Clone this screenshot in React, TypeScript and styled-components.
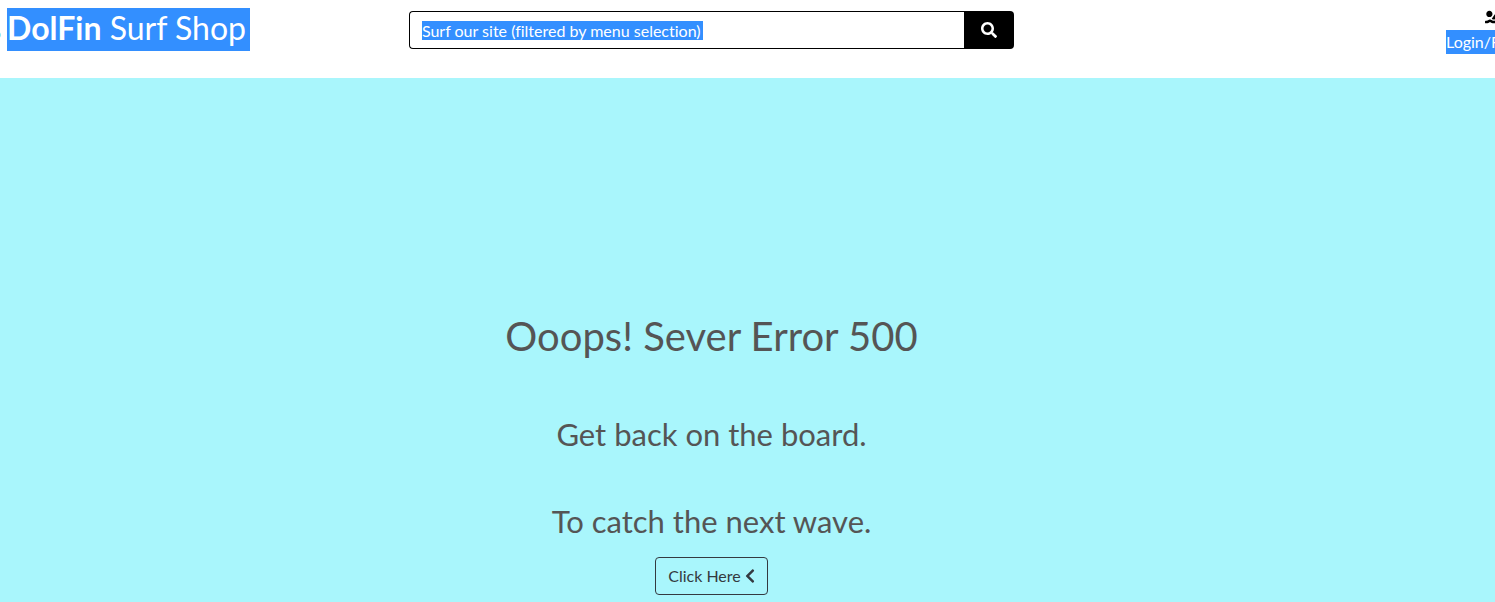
import React from "react";
import styled, { createGlobalStyle } from "styled-components";
import { FaChevronLeft, FaSearch, FaSwimmer } from "react-icons/fa";

const selection = "#338fff";

const GlobalStyle = createGlobalStyle`
  *, *::before, *::after { box-sizing: border-box; }
  body {
    margin: 0;
    background: #fff;
    color: #555;
    font: 400 16px/24px Lato, "Liberation Sans", sans-serif;
    overflow: hidden;
  }
`;

const Page = styled.div`
  display: flex;
  flex-direction: column;
  min-height: 100vh;
  overflow: hidden;
`;

const Header = styled.header`
  display: grid;
  grid-template-columns: 27.35% 40.5% 1fr;
  align-items: start;
  padding-bottom: 24px;
`;

const Brand = styled.a`
  display: flex;
  align-items: flex-start;
  padding-top: 8px;
  color: #fff;
  text-decoration: none;
`;

const LogoTip = styled.svg`
  flex: none;
  width: 7px;
  height: 43px;
`;

const BrandName = styled.span`
  padding: 0 4px 3px 0;
  background: ${selection};
  font-size: 32px;
  line-height: 40px;
  white-space: nowrap;
`;

const SearchForm = styled.form`
  display: flex;
  height: 38px;
  margin-top: 11px;
`;

const SearchInput = styled.input`
  flex: 1;
  min-width: 0;
  padding: 8px 12px 6px;
  border: 1px solid #000;
  border-right: 0;
  border-radius: 4px 0 0 4px;
  background: linear-gradient(${selection}, ${selection}) 12px center / 281px 19px no-repeat #fff;
  color: #555;
  font: inherit;
  font-variant-ligatures: none;
  outline: 0;

  &::placeholder {
    color: #fff;
    opacity: 1;
  }
`;

const SearchButton = styled.button`
  display: flex;
  align-items: center;
  justify-content: center;
  width: 50px;
  padding: 0;
  border: 0;
  border-radius: 0 4px 4px 0;
  background: #000;
  color: #fff;
  font-size: 16px;
`;

const Account = styled.a`
  display: flex;
  flex-direction: column;
  align-items: center;
  justify-self: end;
  margin-right: -53px;
  padding-top: 7px;
  color: #000;
  text-decoration: none;
`;

const SwimmerIcon = styled(FaSwimmer)`
  width: 25px;
  height: 20px;
`;

const AccountLabel = styled.span`
  margin-top: 3px;
  background: ${selection};
  color: #fff;
  white-space: nowrap;
`;

const Main = styled.main`
  display: flex;
  flex: 1;
  flex-direction: column;
  align-items: center;
  padding: 234px 72px 7px 0;
  background: #a9f6fc;
  text-align: center;
`;

const Title = styled.h1`
  margin: 0 0 55px;
  font-size: 40px;
  font-weight: 400;
  line-height: 48px;
`;

const Message = styled.h2`
  margin: 0 0 48px;
  font-size: 31px;
  font-weight: 400;
  line-height: 39px;

  &:last-of-type {
    margin-bottom: 16px;
  }
`;

const BackButton = styled.button`
  display: flex;
  align-items: center;
  gap: 4px;
  height: 38px;
  padding: 0 12px;
  border: 1px solid #343a40;
  border-radius: 4px;
  background: transparent;
  color: #343a40;
  font: inherit;
`;

const BackIcon = styled(FaChevronLeft)`
  width: 10px;
  height: 16px;
`;

export default function App() {
  return (
    <Page>
      <GlobalStyle />
      <Header>
        <Brand href="#">
          <LogoTip viewBox="0 0 7 43" aria-hidden="true">
            <path d="M0 24.5Q2 27 0 29.5Z" fill="#8cecf4" />
          </LogoTip>
          <BrandName>
            <strong>DolFin</strong> Surf Shop
          </BrandName>
        </Brand>
        <SearchForm role="search" onSubmit={(e) => e.preventDefault()}>
          <SearchInput
            type="text"
            aria-label="Search the shop"
            placeholder="Surf our site (filtered by menu selection)"
          />
          <SearchButton type="submit" aria-label="Search">
            <FaSearch />
          </SearchButton>
        </SearchForm>
        <Account href="#">
          <SwimmerIcon />
          <AccountLabel>Login/Register</AccountLabel>
        </Account>
      </Header>
      <Main>
        <Title>Ooops! Sever Error 500</Title>
        <Message>Get back on the board.</Message>
        <Message>To catch the next wave.</Message>
        <BackButton type="button">
          Click Here <BackIcon />
        </BackButton>
      </Main>
    </Page>
  );
}
